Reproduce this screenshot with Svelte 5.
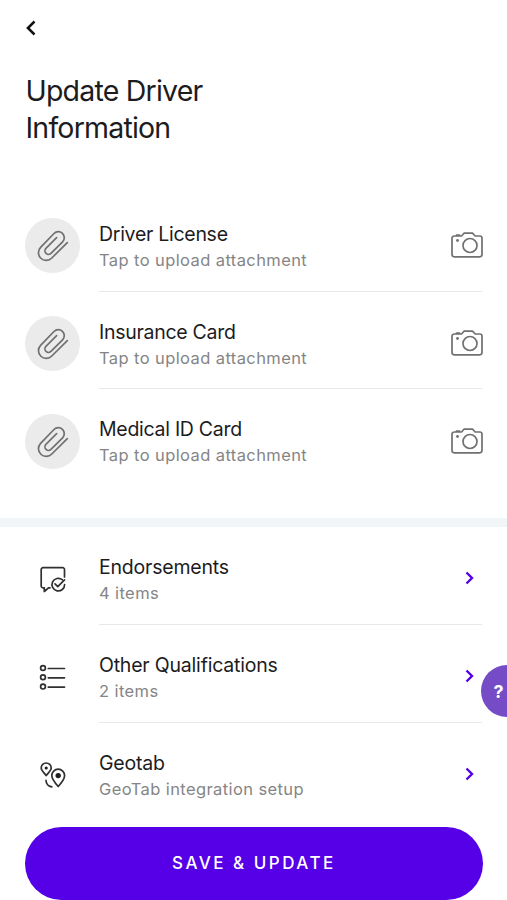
<script>
  const uploads = ['Driver License', 'Insurance Card', 'Medical ID Card'];
  const links = [
    { title: 'Endorsements', note: '4 items', icon: 'badge' },
    { title: 'Other Qualifications', note: '2 items', icon: 'list' },
    { title: 'Geotab', note: 'GeoTab integration setup', icon: 'pins' }
  ];
</script>

<main class="screen">
  <header>
    <button class="back" aria-label="Back">
      <svg width="12" height="16" viewBox="0 0 12 16"><path d="M9.500 1.500 2.900 8 9.500 14.500" /></svg>
    </button>
    <h1>Update Driver<br />Information</h1>
  </header>

  <section class="uploads">
    {#each uploads as title}
      <div class="row">
        <span class="lead disc">
          <svg width="34" height="34" viewBox="0 0 34 34">
            <path d="M31.300 13.600 15.800 29A7.400 7.400 0 0 1 4.600 18.300L18 4.500A5.900 5.900 0 0 1 26.600 12.800L15.200 24.200A3.600 3.600 0 0 1 9.900 19.300L20.600 8.700" />
          </svg>
        </span>
        <div class="body">
          <div class="text">
            <div class="title">{title}</div>
            <div class="note">Tap to upload attachment</div>
          </div>
          <svg class="camera" width="32" height="26" viewBox="0 0 32 26">
            <path d="M3.200 4H10.500L13 1.200H21.500L24.200 4H28.800a2.200 2.200 0 0 1 2.200 2.200V22.600a2.200 2.200 0 0 1-2.200 2.200H3.200A2.200 2.200 0 0 1 1 22.600V6.200A2.200 2.200 0 0 1 3.200 4ZM5.500 3H8.500" />
            <circle cx="19" cy="13.500" r="7" />
            <circle class="dot" cx="6.500" cy="8.500" r="1.400" />
          </svg>
        </div>
      </div>
    {/each}
  </section>

  <div class="band"></div>

  <section class="links">
    {#each links as item}
      <div class="row">
        <span class="lead">
          {#if item.icon === 'badge'}
            <svg width="28" height="28" viewBox="0 0 28 28">
              <path d="M25.500 11V3.500A1.800 1.800 0 0 0 23.700 1.700H4A1.800 1.800 0 0 0 2.200 3.500V20A1.800 1.800 0 0 0 4 21.800H5.300V25.500L9.500 21.800H11" />
              <path d="M23.200 13.700A6.300 6.300 0 1 0 25.600 18.500M16 17.900 18.800 20.600 25.500 13.900" />
            </svg>
          {:else if item.icon === 'list'}
            <svg width="28" height="28" viewBox="0 0 28 28">
              {#each [4, 13.3, 22.6] as y}
                <circle cx="4" cy={y} r="2.400" />
                <path d="M9.300 {y + 0.5}H25.500" />
              {/each}
            </svg>
          {:else}
            <svg width="28" height="28" viewBox="0 0 28 28">
              <path d="M7.200 13.500C4.800 10.500 2.200 8.400 2.200 6a5 5 0 0 1 10 0C12.200 8.400 9.600 10.500 7.200 13.500Z" />
              <path d="M19.200 24.500C15.500 20.400 12.800 17.200 12.800 13.600a6.400 6.400 0 0 1 12.800 0C25.600 17.200 23 20.400 19.200 24.500Z" />
              <path d="M7 18.300C7 21.600 9.400 24.400 12.800 24.900" />
              <circle class="ink" cx="7.200" cy="6" r="1.600" />
              <circle class="ink" cx="19.200" cy="13.600" r="2.700" />
            </svg>
          {/if}
        </span>
        <div class="body">
          <div class="text">
            <div class="title">{item.title}</div>
            <div class="note">{item.note}</div>
          </div>
          <svg class="chevron" width="10" height="14" viewBox="0 0 10 14"><path d="M2.500 1.500 8 7 2.500 12.500" /></svg>
        </div>
      </div>
    {/each}
  </section>

  <button class="save">SAVE &amp; UPDATE</button>
  <button class="help" aria-label="Help">?</button>
</main>

<style>
  .screen {
    position: relative;
    display: flex;
    flex-direction: column;
    width: 507px;
    height: 900px;
    overflow: hidden;
    background: #fff;
    color: #1c1c1e;
    font-family: Inter, 'Liberation Sans', sans-serif;
  }
  button {
    border: 0;
    padding: 0;
    font-family: inherit;
  }
  svg {
    display: block;
    overflow: visible;
    fill: none;
    stroke: #303030;
    stroke-width: 1.7;
    stroke-linecap: round;
    stroke-linejoin: round;
  }
  header {
    box-sizing: border-box;
    flex: none;
    height: 193.700px;
    padding: 20px 25px 0;
  }
  .back {
    display: block;
    background: none;
  }
  .back svg {
    stroke: #111;
    stroke-width: 2.500;
    stroke-linecap: butt;
    stroke-linejoin: miter;
  }
  h1 {
    margin: 36px 0 0 0.500px;
    font-size: 28.500px;
    font-weight: 400;
    line-height: 37px;
    letter-spacing: -0.790px;
  }
  .uploads {
    flex: none;
  }
  .row {
    display: flex;
    height: 97.900px;
    padding: 0 25px;
  }
  .lead {
    display: flex;
    align-items: center;
    justify-content: center;
    flex: none;
    width: 55px;
    height: 55px;
    margin: 24.800px 18.700px 0 0.300px;
  }
  .links .lead {
    margin-top: 25.500px;
  }
  .disc {
    border-radius: 50%;
    background: #ebebeb;
  }
  .disc svg,
  .camera {
    stroke: #707070;
  }
  .body {
    box-sizing: border-box;
    display: flex;
    flex: 1;
    justify-content: space-between;
    padding-top: 27px;
    border-bottom: 1.500px solid #e8e8ea;
  }
  .row:last-child .body {
    border-bottom: 0;
  }
  .title {
    font-size: 19.500px;
    line-height: 26px;
    letter-spacing: -0.280px;
  }
  .links .title {
    letter-spacing: -0.200px;
  }
  .note {
    color: #858585;
    font-size: 16.500px;
    line-height: 26px;
    letter-spacing: 0.400px;
  }
  .camera {
    margin-top: 11.500px;
    margin-right: -1px;
  }
  .dot {
    fill: #707070;
    stroke: none;
  }
  .ink {
    fill: #202020;
    stroke: none;
  }
  .chevron {
    margin: 17.500px 8px 0 0;
    stroke: #5500e6;
    stroke-width: 2.400;
    stroke-linecap: butt;
    stroke-linejoin: miter;
  }
  .band {
    flex: none;
    height: 9px;
    margin-top: 30.600px;
    background: #f1f5f8;
  }
  .links {
    flex: none;
    height: 300px;
  }
  .save {
    flex: none;
    height: 73px;
    margin: 0 24.500px 0 25.300px;
    border-radius: 37px;
    background: #5500e6;
    color: #fff;
    font-size: 17px;
    font-weight: 500;
    letter-spacing: 2.500px;
  }
  .help {
    position: absolute;
    top: 665px;
    left: 481px;
    width: 52px;
    height: 52px;
    padding-right: 17px;
    border-radius: 50%;
    background: #754cc6;
    color: #fff;
    font-size: 18px;
    font-weight: 700;
  }
</style>
